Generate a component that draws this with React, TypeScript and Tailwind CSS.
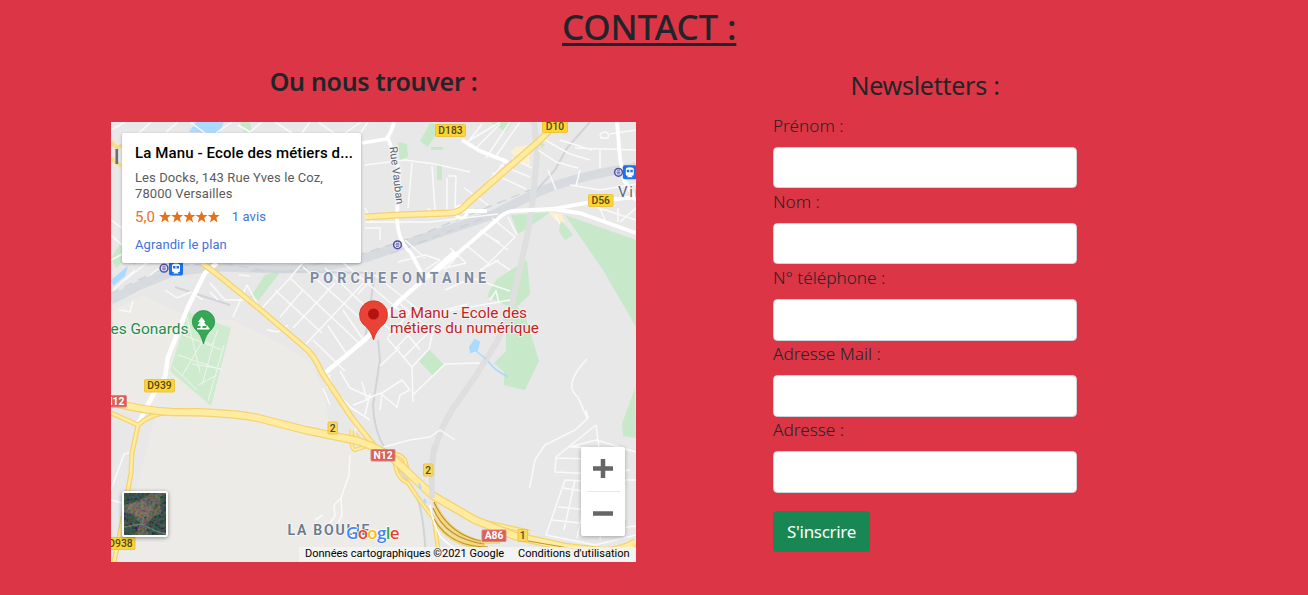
import React from "react";

const fields = ["Prénom :", "Nom :", "N° téléphone :", "Adresse Mail :", "Adresse :"];

const minorStreets = [
  "M468 142L482 124M470 140L500 122M476 148L500 124M496 156L520 122M486 158L510 122M505 162L468 205M500 165L530 177M512 158L532 168M492 173L526 189",
  "M365 165L405 160L435 164L470 172M412 163L408 208M432 166L435 210M447 178V210M448 176L456 176L455 208M464 188L470 192L488 205",
  "M538 150L556 162L578 168M545 140L570 154L590 160M560 140L592 150M575 148L636 150M600 150V168M570 185L600 190L636 184M580 170L576 186M600 135Q601 132 606 132Q610 134 608 138L601 138L600 135M610 134L636 130M556 190L548 170",
  "M365 208L372 222L398 222M365 222H430L498 214M430 209V218M428 208L434 217M365 228H380V240M398 262L425 255L440 260L425 270M405 240L425 258M450 248L466 263M466 245L488 263M480 230L508 250M492 218L515 237L478 274M508 217L517 235M465 247L445 270M482 232L500 243",
  "M598 204L605 220M618 208V222M636 208L620 222M555 215L560 224M590 205L636 220",
  "M262 308L290 278L358 342M275 290L322 333M305 345L370 276M293 328L335 283M325 373L367 335M303 267L360 318M325 268L390 330M340 260L405 315M290 278L305 260M313 340L345 371M328 326L348 356M343 310L362 338M280 317L303 290M358 294L375 275M375 275L425 315L468 304M398 302L425 325",
  "M387 338L412 367L429 349L434 326M400 325L420 350M388 337L414 308M395 349L418 325M403 358L429 332M380 366L400 347M412 367L413 402M414 394L445 364L480 363M445 290L472 278L510 291M425 315L510 300M436 270L466 263M480 270L499 260M495 260L510 270",
  "M380 410L382 393L402 380L410 390L400 395L397 407L380 393M365 400L380 393M365 415L370 394M328 375L335 390L350 407L370 420M340 371L350 388L370 397M327 388L330 375M362 382L367 400L353 405M323 388L330 405",
  "M119 310L130 312L133 301M165 290L177 298L191 292L203 300M210 283L225 300L245 300M239 275L250 276M210 292L218 300M233 317L247 285L258 305M267 330L278 332L288 325",
  "M111 260L130 250L145 264M125 280L148 262M113 290L135 270M150 275L166 264M111 235L122 245M111 220L122 228M111 130L125 122M139 133L151 122M166 132L178 122M190 122L205 133M216 133L232 122M238 125L250 132L262 122M275 122L292 133M310 122L302 133M318 122L334 133M345 133L361 122M361 132L368 122",
  "M350 455L349 475L341 498L334 505L335 516L325 530M315 520L323 515M341 498L342 515L335 530M360 425L350 435M111 490L124 454L131 452M111 500L122 503",
  "M586 410L588 418L575 430L545 445L535 460L530 486L529 488M587 359Q562 385 578 397L587 418M380 448L410 440L430 437L440 430L455 440",
  "M596 425L556 457L555 472L595 474L630 470M596 425L599 448L570 447L596 440L636 452M556 458L590 459M565 480L546 535L595 545L636 535M565 480L605 482M563 488L590 492M558 507L590 510M552 520L598 525M575 480L564 530M590 480L577 538M610 470L600 540M620 480H636M625 485V520M605 530L636 526",
];

function Shield({ x, y, w, h, label, kind }: { x: number; y: number; w: number; h: number; label: string; kind: "yellow" | "red" | "pale" }) {
  const fill = kind === "yellow" ? "#fcd535" : kind === "red" ? "#d8605c" : "#f8d960";
  return (
    <g>
      <rect x={x} y={y} width={w} height={h} rx="1" fill={fill} stroke={kind === "red" ? "#e2807d" : "#edc342"} />
      <text x={x + w / 2} y={y + h / 2 + 3.7} textAnchor="middle" fontSize="10.3" fontWeight={kind === "red" ? 700 : 500} fill={kind === "red" ? "#fff" : "#51461f"}>
        {label}
      </text>
    </g>
  );
}

function Metro({ x, y }: { x: number; y: number }) {
  return (
    <g>
      <circle cx={x} cy={y} r="3.9" fill="#e4e4f2" stroke="#4d50a5" strokeWidth="1.5" />
      <path d={`M${x - 2} ${y}h4M${x - 1.5} ${y - 1.5}h3M${x - 1.5} ${y + 1.5}h3`} stroke="#4d50a5" strokeWidth=".8" />
    </g>
  );
}

function Train({ x, y }: { x: number; y: number }) {
  return (
    <g>
      <rect x={x} y={y} width="14" height="14" rx="2" fill="#1a73e8" />
      <path d={`M${x + 3} ${y + 4}q0-2 4-2t4 2v5q0 1.5-1.5 1.5h-5q-1.5 0-1.5-1.5zM${x + 4} ${y + 12}l1.5-1.5h3l1.5 1.5z`} fill="#fff" />
      <path d={`M${x + 4} ${y + 4.4}h2.5v2.5h-2.5zM${x + 7.5} ${y + 4.4}h2.5v2.5h-2.5z`} fill="#1a73e8" />
    </g>
  );
}

function MapDrawing() {
  const highways = [
    { d: "M365 217L398 215L450 213Q460 213 468 203L508 168L538 142L558 122", w: 7 },
    { d: "M202 263L218 275L262 311L303 346Q314 354 322 373L352 418L364 433L377 449", w: 6 },
    { d: "M111 413L138 425Q153 412 170 413M138 425L132 453L131 473L122 523L114 562", w: 5 },
    { d: "M352 430Q350 449 355 450L375 443M355 434L360 441M395 463Q397 479 408 483L418 498L434 519L438 548L437 562M385 453Q400 452 405 460L410 481M450 508L480 521L530 532", w: 4.5 },
    { d: "M111 402Q145 411 172 412Q230 412 258 418L305 430L358 441Q383 449 398 463L432 495L475 520L515 536L565 547L600 551Q620 552 636 542", w: 8.5 },
  ];
  return (
    <svg className="block h-full w-full" viewBox="111 122 525 440" fontFamily="Roboto, sans-serif" fill="none">
      <rect x="111" y="122" width="525" height="440" fill="#e8e8e8" />
      <path d="M111 312L142 295L195 320L232 320L285 346L312 364L323 390L330 425L375 450L398 470L415 493L424 527L427 562H119L135 493L155 418L111 402Z" fill="#ecebe7" />
      <g fill="#c8e8ca">
        <path d="M420 141L430 123L442 125L428 147ZM398 142L407 144L408 157L400 160ZM431 147H443V150H431ZM437 164H442V180H437ZM490 122H512L506 132ZM539 142L545 144L542 149Z" />
        <path d="M511 215L550 212L541 219L518 234Z" />
        <path d="M565 215L636 240V327L603 270ZM561 220L573 235L565 240L559 231Z" />
        <path d="M527 260L530 294L517 307L526 318L539 361L525 390L504 385V372L494 363L506 351V321L510 307L488 297Q487 293 497 279Z" />
        <path d="M429 349L444 365L433 376L419 361ZM250 297L265 275L281 271L259 300ZM635 388L622 424L623 436L636 438ZM240 122H250L252 132H244Z" />
        <path d="M111 258L121 242L125 260L116 268ZM128 262L140 255L135 265Z" />
      </g>
      <path d="M188 312L231 328L211 406L170 371Z" fill="#ceebcf" />
      <path d="M183 335L222 350M178 355L222 370M173 367L197 390M187 317L200 372M202 340L212 345L218 330M214 342L202 385M224 345L208 401M182 376L202 342M198 385L217 375M192 364L222 369" stroke="#eff6ec" />
      <path d="M189 132L196 122H224L219 133ZM111 280L128 266L125 276L113 286Z" fill="#aadaff" />
      <path d="M516 147L529 145L530 166L520 162L510 152ZM549 212L562 214L565 223L555 220Z" fill="#fcf1ce" />
      <path d="M111 300L140 285L172 272L215 267L275 269Q325 270 365 258L448 230L492 215L532 195Q570 177 636 167" stroke="#d7dade" strokeWidth="9" />
      <path d="M111 294L136 281L170 266L220 263L280 273L365 253L420 235L530 190M390 254L482 219" stroke="#cbd0d5" strokeWidth="1.2" strokeDasharray="9 6" />
      <path d="M590 122L567 148L555 170L532 195M378 340L380 360L373 405Q374 430 384 447L415 492Q424 510 426 562M250 271L375 273L365 340M175 287L230 305" stroke="#d0d4d9" strokeWidth="2" />
      <path d="M534 122L537 155L533 198L528 232L521 264L511 308L498 340L475 377L452 410Q438 433 435 450" stroke="#dfdfdf" strokeWidth="6" />
      {minorStreets.map((d) => (
        <path key={d} d={d} stroke="#fafafa" strokeWidth="1.5" strokeLinejoin="round" />
      ))}
      <path d="M362 143L386 139Q391 134 394 122M388 138L399 170L397 218Q398 242 411 253L421 272M462 140L480 151L508 162M438 270L465 247L498 219Q503 213 512 211L552 209L598 201L636 197M552 209L580 213L636 233M617 122L620 158L624 180L636 200M450 211H487" stroke="#fff" strokeWidth="3.8" />
      <path d="M455 252L398 302L365 340L325 373M217 263L205 273L188 307L168 357L165 377L153 395L138 424" stroke="#fff" strokeWidth="4.5" />
      <circle cx="461" cy="212" r="6" stroke="#fff" strokeWidth="3" />
      <path d="M111 142L117 148L123 145M111 158L121 166" stroke="#f6dd86" strokeWidth="4" />
      {highways.map((road) => (
        <g key={road.d} strokeLinejoin="round">
          <path d={road.d} stroke="#f5d271" strokeWidth={road.w} />
          <path d={road.d} stroke="#ffec9f" strokeWidth={road.w - 2.5} />
        </g>
      ))}
      <path d="M434 502Q448 534 481 542H500M435 508Q445 540 485 545M434 519Q450 547 488 548" stroke="#f5d87e" strokeWidth="4" />
      <path d="M434 502Q448 534 481 541M433 508Q445 538 484 544M434 519Q450 547 488 547M528 541L580 550" stroke="#bd9438" strokeWidth="1.2" />
      <path d="M430 505Q432 520 440 536Q450 547 460 550" stroke="#fff" strokeWidth="1.5" />
      <path d="M435 445Q431 460 432 498" stroke="#dddddd" strokeWidth="6" />
      <path d="M470 347L475 340L479 342L477 350L471 352ZM419 483L421 489M424 499L426 503" fill="#aadaff" stroke="#aadaff" strokeWidth="2" />
      <path d="M476 351L486 359M488 361Q494 370 508 377" stroke="#aadaff" strokeWidth="1.6" />
      <path d="M490 300L496 291L499 303" stroke="#fafafa" strokeWidth="1.5" />
      <path d="M116.800 149V164" stroke="#657078" strokeWidth="2.7" />

      <Shield x={435.500} y={124.500} w={30} h={12} label="D183" kind="yellow" />
      <Shield x={542.500} y={120.500} w={25} h={12} label="D10" kind="yellow" />
      <Shield x={588.500} y={194.500} w={24.500} h={12} label="D56" kind="yellow" />
      <Shield x={144.500} y={379.500} w={30} h={12.500} label="D939" kind="yellow" />
      <Shield x={106} y={537.500} w={29} h={12} label="D938" kind="yellow" />
      <Shield x={103} y={395.500} w={23.500} h={11.500} label="N12" kind="red" />
      <Shield x={371} y={449.500} w={24} h={11.500} label="N12" kind="red" />
      <Shield x={482} y={530} w={24} h={11.500} label="A86" kind="red" />
      <Shield x={328} y={422} w={9.500} h={12} label="2" kind="pale" />
      <Shield x={423.500} y={464} w={9.500} h={12} label="2" kind="pale" />
      <Shield x={518} y={529.500} w={9.500} h={12} label="1" kind="pale" />
      <Metro x={397.500} y={244.800} />
      <Metro x={618.500} y={172.300} />
      <Metro x={164} y={268.200} />
      <Train x={622.800} y={165.300} />
      <Train x={169} y={261.500} />

      <g stroke="#f4f4f4" strokeWidth="2" paintOrder="stroke" strokeLinejoin="round">
        <text x="618" y="197" fontSize="15" letterSpacing="1.8" fill="#5d6b7b">Viroflay</text>
        <text x="0" y="0" transform="translate(389.500 147) rotate(83)" fontSize="11" textLength="58" fill="#596777">Rue Vauban</text>
        <text x="310" y="283" fontSize="14.200" fontWeight="700" textLength="176" fill="#7b8ba3">PORCHEFONTAINE</text>
        <text x="287.500" y="535" fontSize="14" fontWeight="600" textLength="82" fill="#69798b">LA BOULIE</text>
        <text x="110.500" y="333.500" fontSize="15" textLength="78" lengthAdjust="spacingAndGlyphs" fill="#258b49">es Gonards</text>
        <text x="390" y="317.500" fontSize="15.500" textLength="137" lengthAdjust="spacingAndGlyphs" fill="#c5221f">La Manu - Ecole des</text>
        <text x="390" y="332.500" fontSize="15.500" textLength="149" lengthAdjust="spacingAndGlyphs" fill="#c5221f">métiers du numérique</text>
      </g>
      <path d="M203.500 344Q201 334 196 330A11.200 11.200 0 1 1 211 330Q206 334 203.500 344Z" fill="#34a853" stroke="#258b49" strokeWidth=".7" />
      <path d="M201.500 317L205.500 322H204L206.500 326H202.500V328H209.500V329.500H197V328H200.500V326H197.500L199.700 322H198ZM207 325L209 328H206Z" fill="#fff" />
      <path d="M373.500 340Q371 330 363 324A14 14 0 1 1 384 324Q376 330 373.500 340Z" fill="#ea4335" stroke="#cf3427" strokeWidth=".8" />
      <circle cx="373.500" cy="314" r="5.500" fill="#b31412" />
      <text x="346" y="539" fontFamily="'Open Sans', sans-serif" fontSize="17" fontWeight="600" textLength="53.500" stroke="#fff" strokeWidth="1.500" paintOrder="stroke">
        <tspan fill="#4285f4">G</tspan><tspan fill="#ea4335">o</tspan><tspan fill="#fbbc04">o</tspan><tspan fill="#4285f4">g</tspan><tspan fill="#34a853">l</tspan><tspan fill="#ea4335">e</tspan>
      </text>
    </svg>
  );
}

function Satellite() {
  return (
    <svg className="block h-full w-full" viewBox="0 0 42 42">
      <defs>
        <filter id="terrain" x="0" y="0" width="100%" height="100%">
          <feTurbulence type="fractalNoise" baseFrequency=".35" numOctaves="3" seed="4" />
          <feColorMatrix values="1 0 0 0 -.25 0 1 0 0 -.25 0 0 1 0 -.27 0 0 0 0 .35" />
        </filter>
      </defs>
      <rect width="42" height="42" fill="#524f43" />
      <path d="M0 0H28L16 7L0 12ZM36 5L42 0V42H26L21 33L29 24L37 20ZM0 19L8 22L17 31L10 42H0Z" fill="#12332d" />
      <path d="M3 12L18 8L30 14L26 22L18 25L5 19Z" fill="#705d50" />
      <path d="M0 34L17 31L32 38L42 41M18 31L20 23L27 16" stroke="#64706a" strokeWidth="1.300" fill="none" />
      <rect width="42" height="42" filter="url(#terrain)" />
    </svg>
  );
}

function MapPanel() {
  return (
    <div className="relative h-[440px] w-[525px] overflow-hidden font-['Roboto',sans-serif]">
      <MapDrawing />
      <div className="absolute left-[11px] top-[11px] h-[130px] w-[239px] rounded-[2px] bg-white pl-[13px] pt-[10px] shadow-[0_1px_3px_rgba(0,0,0,0.3)]">
        <div className="whitespace-nowrap text-[15px] font-medium leading-5 tracking-[0.12px] text-black">La Manu - Ecole des métiers d...</div>
        <div className="mt-[7px] whitespace-nowrap text-[13px] leading-4 tracking-[0.1px] text-[#5b5b5b]">
          Les Docks, 143 Rue Yves le Coz,<br />78000 Versailles
        </div>
        <div className="mt-[7px] flex h-4 items-center whitespace-nowrap">
          <span className="text-[15px] text-[#e7711b]">5,0</span>
          <svg className="ml-[4px] h-3 w-[61px]" viewBox="0 0 61 12" fill="#e7711b">
            {[0, 12.2, 24.4, 36.6, 48.8].map((x) => (
              <path key={x} transform={`translate(${x} 0)`} d="M6 0L7.600 4H12L8.500 6.800L9.800 11.500L6 8.800L2.200 11.500L3.500 6.800L0 4H4.400Z" />
            ))}
          </svg>
          <span className="ml-3 text-[13px] tracking-[0.1px] text-[#4272db]">1 avis</span>
        </div>
        <div className="mt-[12px] text-[13px] leading-4 tracking-[0.1px] text-[#4272db]">Agrandir le plan</div>
      </div>
      <div className="absolute left-[11px] top-[369px] h-[46px] w-[46px] rounded-[3px] border-2 border-white shadow-[0_1px_4px_rgba(0,0,0,0.4)]">
        <Satellite />
      </div>
      <div className="absolute left-[470px] top-[325px] flex h-[89px] w-[44px] flex-col items-center rounded-[2px] bg-white shadow-[0_1px_4px_rgba(0,0,0,0.3)]">
        <svg className="h-11 w-11" viewBox="0 0 44 44"><path d="M12 21.500H32M22 12V31" stroke="#666" strokeWidth="4.500" /></svg>
        <div className="h-px w-[33px] bg-[#e6e6e6]" />
        <svg className="h-11 w-11" viewBox="0 0 44 44"><path d="M12 21.500H32" stroke="#666" strokeWidth="4.500" /></svg>
      </div>
      <div className="absolute bottom-0 right-0 flex h-[15px] w-[337px] items-center bg-[#f5f5f5]/80 pl-[6px] text-[11px] text-black">
        <span className="w-[213px] whitespace-nowrap">Données cartographiques ©2021 Google</span>
        <span className="whitespace-nowrap">Conditions d'utilisation</span>
      </div>
    </div>
  );
}

export default function App() {
  return (
    <main className="flex h-[595px] w-[1308px] flex-col overflow-hidden bg-[#dc3545] font-['Noto_Sans',sans-serif] text-[#212529]">
      <h1 className="ml-[562px] h-[54px] whitespace-nowrap pt-[6px] text-[35px] font-medium leading-[42px] tracking-[-0.2px] underline decoration-[2.500px] underline-offset-[3px]">CONTACT :</h1>
      <div className="flex">
        <section className="ml-[111px] w-[525px]">
          <h2 className="h-[68px] pt-[11px] text-center text-[25px] font-semibold leading-8 tracking-[-0.3px]">Ou nous trouver :</h2>
          <MapPanel />
        </section>
        <section className="ml-[137px] w-[304px]">
          <h2 className="h-[58px] pt-[15px] text-center text-[25px] leading-8 tracking-[-0.25px]">Newsletters :</h2>
          <form>
            {fields.map((field) => (
              <label key={field} className="block h-[76.200px]">
                <span className="block h-[34.700px] whitespace-nowrap pt-[0.700px] text-[17.200px] font-light leading-[26px]">{field}</span>
                <input className="block h-[41.500px] w-[304px] rounded-[4.500px] border border-[#ced4da] bg-white px-3 outline-none" />
              </label>
            ))}
            <button type="button" className="mt-[18px] h-[41px] w-[97px] whitespace-nowrap rounded-[4px] bg-[#198754] pt-[2px] text-[17px] leading-6 tracking-[-0.3px] text-white">S'inscrire</button>
          </form>
        </section>
      </div>
    </main>
  );
}
